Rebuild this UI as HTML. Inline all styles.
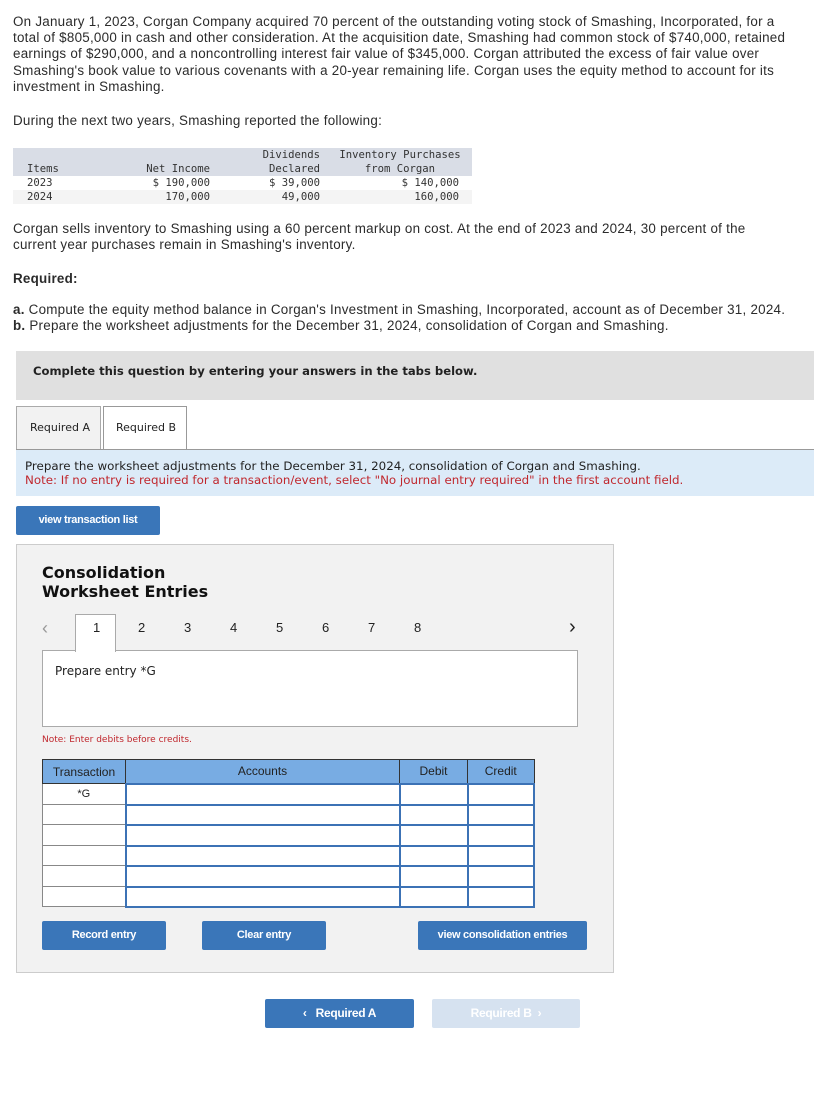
<!DOCTYPE html>
<html><head><meta charset="utf-8"><style>
*{margin:0;padding:0;box-sizing:border-box}
body{width:828px;height:1097px;background:#fff;position:relative;font-family:"Liberation Sans",sans-serif;color:#222;overflow:hidden}
.a{position:absolute}
.p{position:absolute;left:13px;font-size:13.4px;line-height:16.2px;white-space:nowrap;color:#2b2b2b;letter-spacing:0.25px}
.mono{font-family:"DejaVu Sans Mono","Liberation Mono",monospace;font-size:10.6px;line-height:14px;color:#333}
.btn{position:absolute;background:#3a76b9;color:#fff;font-weight:bold;font-size:11px;letter-spacing:-0.3px;text-align:center;border-radius:2px}
.tab{position:absolute;font-family:"DejaVu Sans",sans-serif;font-size:11px;color:#222}
table{border-collapse:collapse}
</style></head><body>
<div class="p" style="top:14px">On January 1, 2023, Corgan Company acquired 70 percent of the outstanding voting stock of Smashing, Incorporated, for a<br>total of $805,000 in cash and other consideration. At the acquisition date, Smashing had common stock of $740,000, retained<br>earnings of $290,000, and a noncontrolling interest fair value of $345,000. Corgan attributed the excess of fair value over<br>Smashing's book value to various covenants with a 20-year remaining life. Corgan uses the equity method to account for its<br>investment in Smashing.</div>
<div class="p" style="top:113px">During the next two years, Smashing reported the following:</div>

<div class="a" style="left:13px;top:148px;width:459px;height:28px;background:#d9dde6"></div>
<div class="a" style="left:13px;top:190px;width:459px;height:14px;background:#f4f4f4"></div>
<div class="a mono" style="left:27px;top:162px">Items<br>2023<br>2024</div>
<div class="a mono" style="left:100px;top:162px;width:110px;text-align:right">Net Income<br>$ 190,000<br>170,000</div>
<div class="a mono" style="left:220px;top:148px;width:100px;text-align:right">Dividends<br>Declared<br>$ 39,000<br>49,000</div>
<div class="a mono" style="left:330px;top:148px;width:140px;text-align:center">Inventory Purchases<br>from Corgan</div>
<div class="a mono" style="left:340px;top:176px;width:119px;text-align:right">$ 140,000<br>160,000</div>

<div class="p" style="top:221px">Corgan sells inventory to Smashing using a 60 percent markup on cost. At the end of 2023 and 2024, 30 percent of the<br>current year purchases remain in Smashing's inventory.</div>
<div class="p" style="top:271px;font-weight:bold">Required:</div>
<div class="p" style="top:302px"><b>a.</b> Compute the equity method balance in Corgan's Investment in Smashing, Incorporated, account as of December 31, 2024.<br><b>b.</b> Prepare the worksheet adjustments for the December 31, 2024, consolidation of Corgan and Smashing.</div>

<div class="a" style="left:16px;top:351px;width:798px;height:49px;background:#e0e0e0"></div>
<div class="a" style="left:33px;top:364px;font-family:'DejaVu Sans',sans-serif;font-weight:bold;font-size:11.6px;color:#222">Complete this question by entering your answers in the tabs below.</div>

<div class="a" style="left:16px;top:406px;width:85px;height:44px;background:#f2f2f2;border:1px solid #aaa;border-bottom:none"></div>
<div class="tab" style="left:30px;top:421px">Required A</div>
<div class="a" style="left:103px;top:406px;width:84px;height:44px;background:#fff;border:1px solid #999;border-bottom:none"></div>
<div class="tab" style="left:116px;top:421px">Required B</div>
<div class="a" style="left:16px;top:449px;width:798px;height:1px;background:#999"></div>
<div class="a" style="left:16px;top:450px;width:798px;height:46px;background:#dcebf8"></div>
<div class="a" style="left:25px;top:459px;font-family:'DejaVu Sans',sans-serif;font-size:11.85px;line-height:14px;white-space:nowrap;color:#222">Prepare the worksheet adjustments for the December 31, 2024, consolidation of Corgan and Smashing.<br><span style="color:#c0272d">Note: If no entry is required for a transaction/event, select "No journal entry required" in the first account field.</span></div>

<div class="btn" style="left:16px;top:506px;width:144px;height:29px;line-height:29px">view transaction list</div>

<div class="a" style="left:16px;top:544px;width:598px;height:429px;background:#f2f2f2;border:1px solid #ccc"></div>
<div class="a" style="left:42px;top:563px;font-family:'DejaVu Sans',sans-serif;font-weight:bold;font-size:16px;line-height:19px;color:#111">Consolidation<br>Worksheet Entries</div>

<div class="a" style="left:42px;top:618px;color:#999;font-size:18px">&lsaquo;</div>
<div class="a" style="left:569px;top:616px;color:#222;font-size:20px">&rsaquo;</div>
<div class="a" style="left:42px;top:650px;width:536px;height:77px;background:#fff;border:1px solid #aaa"></div>
<div class="a" style="left:75px;top:614px;width:41px;height:38px;background:#fff;border:1px solid #aaa;border-bottom:none"></div>
<div class="a" style="left:75px;top:620px;width:660px;font-size:13px;color:#222">
<span class="a" style="left:18px">1</span><span class="a" style="left:63px">2</span><span class="a" style="left:109px">3</span><span class="a" style="left:155px">4</span><span class="a" style="left:201px">5</span><span class="a" style="left:247px">6</span><span class="a" style="left:293px">7</span><span class="a" style="left:339px">8</span></div>
<div class="a" style="left:55px;top:664px;font-family:'DejaVu Sans',sans-serif;font-size:12px;color:#222">Prepare entry *G</div>
<div class="a" style="left:42px;top:735px;font-family:'DejaVu Sans',sans-serif;font-size:9px;color:#c0272d">Note: Enter debits before credits.</div>

<table class="a" style="left:42px;top:759px;width:493px;font-size:12px">
<tr style="height:24px;background:#78ace3;color:#222"><td style="width:83px;border:1px solid #333;text-align:center">Transaction</td><td style="width:274px;border:1px solid #333;text-align:center">Accounts</td><td style="width:68px;border:1px solid #333;text-align:center">Debit</td><td style="border:1px solid #333;text-align:center">Credit</td></tr>
<tr style="height:21px"><td style="background:#fff;border:1px solid #888;text-align:center;font-size:11px">*G</td><td style="background:#fff;border:2px solid #3c72b5"></td><td style="background:#fff;border:2px solid #3c72b5"></td><td style="background:#fff;border:2px solid #3c72b5"></td></tr>
<tr style="height:20px"><td style="background:#fff;border:1px solid #888"></td><td style="background:#fff;border:2px solid #3c72b5"></td><td style="background:#fff;border:2px solid #3c72b5"></td><td style="background:#fff;border:2px solid #3c72b5"></td></tr>
<tr style="height:21px"><td style="background:#fff;border:1px solid #888"></td><td style="background:#fff;border:2px solid #3c72b5"></td><td style="background:#fff;border:2px solid #3c72b5"></td><td style="background:#fff;border:2px solid #3c72b5"></td></tr>
<tr style="height:20px"><td style="background:#fff;border:1px solid #888"></td><td style="background:#fff;border:2px solid #3c72b5"></td><td style="background:#fff;border:2px solid #3c72b5"></td><td style="background:#fff;border:2px solid #3c72b5"></td></tr>
<tr style="height:21px"><td style="background:#fff;border:1px solid #888"></td><td style="background:#fff;border:2px solid #3c72b5"></td><td style="background:#fff;border:2px solid #3c72b5"></td><td style="background:#fff;border:2px solid #3c72b5"></td></tr>
<tr style="height:20px"><td style="background:#fff;border:1px solid #888"></td><td style="background:#fff;border:2px solid #3c72b5"></td><td style="background:#fff;border:2px solid #3c72b5"></td><td style="background:#fff;border:2px solid #3c72b5"></td></tr>
</table>

<div class="btn" style="left:42px;top:921px;width:124px;height:29px;line-height:29px">Record entry</div>
<div class="btn" style="left:202px;top:921px;width:124px;height:29px;line-height:29px">Clear entry</div>
<div class="btn" style="left:418px;top:921px;width:169px;height:29px;line-height:29px">view consolidation entries</div>

<div class="btn" style="left:265px;top:999px;width:149px;height:29px;line-height:29px;font-size:12px">&lsaquo;&nbsp;&nbsp; Required A</div>
<div class="btn" style="left:432px;top:999px;width:148px;height:29px;line-height:29px;font-size:12px;background:#d6e2f0">Required B &nbsp;&rsaquo;</div>
</body></html>
